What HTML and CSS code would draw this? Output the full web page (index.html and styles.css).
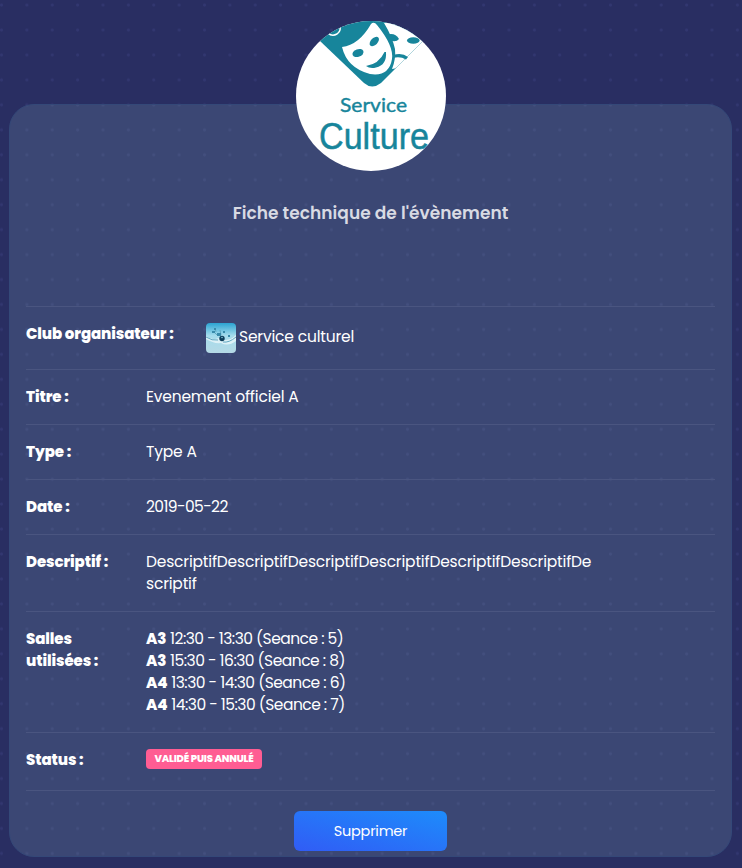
FILE: index.html
```html
<!DOCTYPE html>
<html lang="fr">
<head>
<meta charset="utf-8">
<title>Fiche technique</title>
<link rel="stylesheet" href="styles.css">
</head>
<body>
<main class="card">
  <svg class="avatar" viewBox="0 0 150 150" role="img" aria-label="Service Culture">
    <defs><clipPath id="round"><circle cx="75" cy="75" r="75"/></clipPath></defs>
    <g clip-path="url(#round)">
      <rect width="150" height="150" fill="#fff"/>
      <path d="M0-4H150L126 21 85 62Q76 69 68 62L24 20Z" fill="#17859b"/>
      <path d="M88 2H101Q108 6 114 7L150 0 126 21 101 46Q99 48 96 48Q100 38 99 28Q96 15 88 2Z" fill="#fff"/>
      <path d="M126 21 100 47" stroke="#9dcbd3" stroke-width=".5"/>
      <path d="M46 26Q63 24 75 3Q78 0 81 4Q98 25 96 38Q93 56 74 53Q51 47 46 26Z" fill="#fff"/>
      <g fill="#17859b">
        <ellipse cx="62" cy="32" rx="5.700" ry="3.800" transform="rotate(-20 62 32)"/>
        <ellipse cx="78.300" cy="20.500" rx="5.700" ry="3.400" transform="rotate(-45 78.300 20.500)"/>
        <path d="M70 45Q83 43 88.500 31H90Q91 44 80 46.500Q74 48 70 45Z"/>
        <path d="M90 14Q99 11 103 18Q100 22 93 19Z"/>
        <ellipse cx="117.300" cy="19.500" rx="6.300" ry="3.200"/>
        <path d="M97 34Q106 31 112 36L110 38.500Q104 35 97 37Z"/>
      </g>
      <path d="M32 12Q36 16 41 13Q45 10 44 6" fill="none" stroke="#fff" stroke-width="1.500"/>
      <text class="logo-small" x="44" y="91" textLength="67" lengthAdjust="spacingAndGlyphs">Service</text>
      <text class="logo-large" x="23" y="128" textLength="110" lengthAdjust="spacingAndGlyphs">Culture</text>
    </g>
  </svg>
  <h1 class="title">Fiche technique de l'évènement</h1>
  <dl class="details">
    <div class="row row-club">
      <dt>Club organisateur :</dt>
      <dd class="club">
        <svg class="club-image" viewBox="0 0 30 30" aria-hidden="true">
          <defs><linearGradient id="water" x2="0" y2="1"><stop stop-color="#2ba4d2"/><stop offset=".42" stop-color="#a5dced"/><stop offset="1" stop-color="#b5d9e5"/></linearGradient></defs>
          <rect width="30" height="30" fill="url(#water)"/>
          <path d="M0 13Q6 18 13 15Q22 20 30 12V18Q22 24 15 20Q8 21 0 16Z" fill="#ddf1f7"/>
          <path d="M0 14Q6 18 12 17M17 19Q23 20 30 14M7 8L12 13M9 5L10 9M14 7L15 12" fill="none" stroke="#62a7c1" stroke-width="1"/>
          <path d="M6 8h3v2H6zM8 5h2v2H8zM11 10h4v3h-4zM22 12h2v2h-2zM17 8h2v2h-2z" fill="#398bab"/>
          <circle cx="16" cy="15.500" r="2.700" fill="#0e3e5b"/><circle cx="16" cy="14.500" r=".8" fill="#81c8de"/>
        </svg><span>Service culturel</span>
      </dd>
    </div>
    <div class="row"><dt>Titre :</dt><dd>Evenement officiel A</dd></div>
    <div class="row"><dt>Type :</dt><dd>Type A</dd></div>
    <div class="row"><dt>Date :</dt><dd class="date">2019-05-22</dd></div>
    <div class="row"><dt>Descriptif :</dt><dd>DescriptifDescriptifDescriptifDescriptifDescriptifDescriptifDe<br>scriptif</dd></div>
    <div class="row"><dt>Salles utilisées :</dt><dd class="slots"><div><b>A3</b> 12:30 - 13:30 (Seance : 5)</div><div><b>A3</b> 15:30 - 16:30 (Seance : 8)</div><div><b>A4</b> 13:30 - 14:30 (Seance : 6)</div><div><b>A4</b> 14:30 - 15:30 (Seance : 7)</div></dd></div>
    <div class="row row-status"><dt>Status :</dt><dd><span class="badge">VALIDÉ PUIS ANNULÉ</span></dd></div>
  </dl>
  <button class="delete" type="button">Supprimer</button>
</main>
</body>
</html>
```
FILE: styles.css
```css
* { box-sizing: border-box; }
body {
  margin: 0;
  height: 868px;
  padding: 104px 10px 11px 9px;
  background: radial-gradient(circle at 1.5px 5px, #323770 0 1px, transparent 2px) 0 0 / 25.38px 24.96px, #292e62;
  color: #fff;
  font: 15.5px/22px Poppins, Inter, sans-serif;
  overflow: hidden;
}
.card {
  height: 753px;
  padding: 0 16px;
  border: 1px solid #344878;
  border-radius: 25px;
  background: radial-gradient(circle at 1.5px 5px, #434f7e 0 1px, transparent 2px) 15.38px -5.12px / 25.38px 24.96px, #3b4774;
  display: flex;
  flex-direction: column;
  align-items: center;
}
.avatar { width: 150px; height: 150px; margin-top: -84px; flex: none; }
.logo-small, .logo-large { fill: #17859b; }
.logo-small { font: 20px Lato, sans-serif; stroke: #17859b; stroke-width: .4px; }
.logo-large { font: 37px "Liberation Sans", sans-serif; stroke: #17859b; stroke-width: .5px; }
.title { margin: 31px 0 0; font-size: 17px; line-height: 22px; font-weight: 600; color: #d8dae3; letter-spacing: .03px; white-space: nowrap; }
.details { width: 689px; margin: 82px 0 0; border-bottom: 1px solid #4a5580; }
.row { display: grid; grid-template-columns: 104px 450px; column-gap: 16px; padding: 16px 0; border-top: 1px solid #4a5580; }
.row-club { grid-template-columns: 164px 390px; height: 63px; }
.row-status { height: 58px; }
dt { font-size: 15px; font-weight: 800; letter-spacing: -.1px; }
dd { margin: 0; min-width: 0; white-space: nowrap; letter-spacing: -.185px; }
.date { letter-spacing: -.6px; }
.slots { letter-spacing: -.52px; }
.club { display: flex; align-items: center; gap: 3px; height: 30px; }
.club-image { width: 30px; height: 30px; border-radius: 4px; flex: none; }
.club span { position: relative; top: -1px; }
b { font-size: 15px; font-weight: 800; letter-spacing: 0; }
.badge { display: block; width: 116px; height: 20px; border-radius: 4px; background: #ff5d93; font-size: 10px; line-height: 19px; font-weight: 800; text-align: center; letter-spacing: -.2px; }
.delete { width: 153px; height: 40px; margin-top: 20px; padding: 0; border: 0; border-radius: 6px; flex: none; background: linear-gradient(to top right, #315cf5, #1d8cfb); color: #fff; font: 14.5px/40px Poppins, Inter, sans-serif; letter-spacing: -.25px; }
```
